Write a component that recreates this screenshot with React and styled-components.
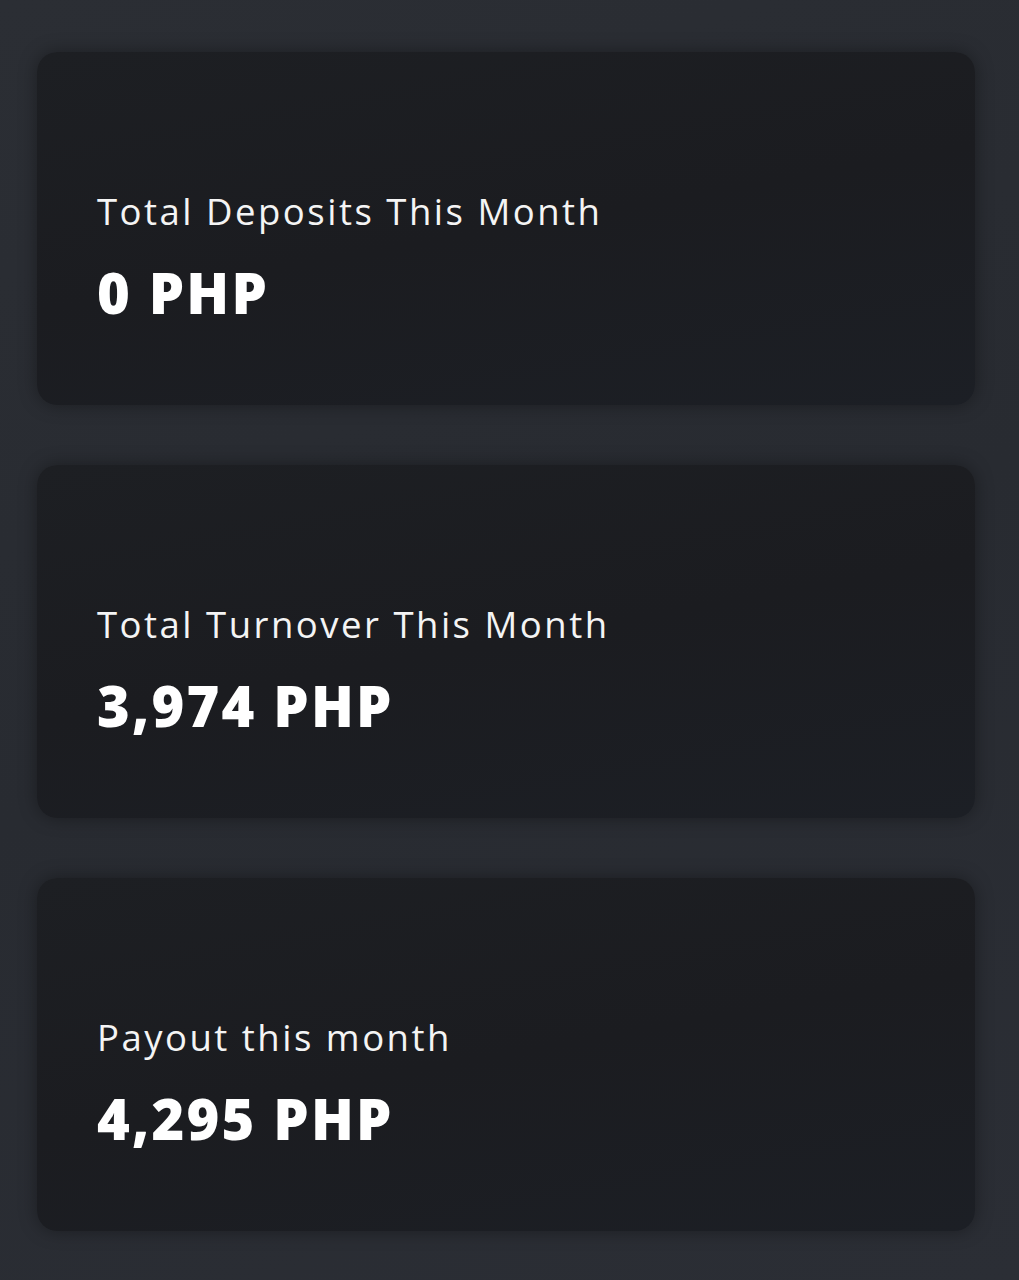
import React from "react";
import styled, { createGlobalStyle } from "styled-components";

const Global = createGlobalStyle`
  html, body {
    margin: 0;
    padding: 0;
    background: #2a2d33;
  }
  body {
    font-family: "Open Sans", "Liberation Sans", sans-serif;
  }
`;

const Page = styled.div`
  width: 1019px;
  height: 1280px;
  box-sizing: border-box;
  padding: 52px 44px 0 37px;
  display: flex;
  flex-direction: column;
  gap: 60px;
  background: linear-gradient(160deg, #2b2e34 0%, #282b31 50%, #2b2e35 100%);
`;

const Card = styled.div`
  height: 353px;
  box-sizing: border-box;
  border-radius: 20px;
  background: linear-gradient(170deg, #1d1f23 0%, #1b1c20 50%, #1c1f25 100%);
  box-shadow: 0 0 18px rgba(0, 0, 0, 0.35);
  padding: 137px 60px 0;
  display: flex;
  flex-direction: column;
`;

const Label = styled.div`
  color: #f4f4f4;
  font-size: 36.5px;
  font-weight: 400;
  line-height: 44px;
  letter-spacing: 2.5px;
`;

const Value = styled.div`
  color: #ffffff;
  font-size: 56px;
  font-weight: 800;
  line-height: 64px;
  margin-top: 27px;
  letter-spacing: 2.2px;
`;

const stats = [
  { label: "Total Deposits This Month", value: "0 PHP" },
  { label: "Total Turnover This Month", value: "3,974 PHP" },
  { label: "Payout this month", value: "4,295 PHP" },
];

export default function App() {
  return (
    <>
      <Global />
      <Page>
        {stats.map((s) => (
          <Card key={s.label}>
            <Label>{s.label}</Label>
            <Value>{s.value}</Value>
          </Card>
        ))}
      </Page>
    </>
  );
}
